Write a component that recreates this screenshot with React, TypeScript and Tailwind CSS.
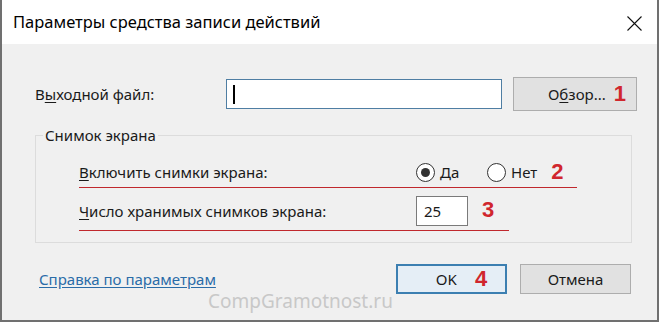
import React from "react";

const font = { fontFamily: '"Noto Sans", "Open Sans", sans-serif' };

function RedNum({ n }: { n: string }) {
  return (
    <span className="text-[22px] leading-none font-black text-[#d0262d]" style={{ fontFamily: '"Liberation Sans", Arial, sans-serif' }}>
      {n}
    </span>
  );
}

function Radio({ checked, label }: { checked?: boolean; label: string }) {
  return (
    <div className="flex items-center gap-[5px]">
      <span className="w-[19px] h-[19px] rounded-full border border-[#333] bg-white flex items-center justify-center">
        {checked && <span className="w-[9px] h-[9px] rounded-full bg-[#333]" />}
      </span>
      <span>{label}</span>
    </div>
  );
}

export default function App() {
  return (
    <div
      className="w-[659px] h-[322px] flex flex-col border-l-2 border-r-2 border-b-2 border-[#707070] bg-[#f0f0f0] text-[15px] text-[#1a1a1a] overflow-hidden"
      style={font}
    >
      {/* Title bar */}
      <div className="h-[44px] bg-white flex items-center justify-between pl-[11px] pr-[15px] shrink-0">
        <span className="text-[16.5px] text-black">Параметры средства записи действий</span>
        <svg width="15" height="15" viewBox="0 0 15 15" className="mt-[2px]">
          <path d="M0.5 0.5 L14.5 14.5 M14.5 0.5 L0.5 14.5" stroke="#111" strokeWidth="1.1" fill="none" />
        </svg>
      </div>

      {/* Body */}
      <div className="relative flex-1 flex flex-col">
        {/* Output file row */}
        <div className="flex items-center mt-[33px] h-[34px]">
          <span className="ml-[33px] w-[191px]">
            В<span className="underline underline-offset-2">ы</span>ходной файл:
          </span>
          <div className="w-[276px] h-[30px] border border-[#4f7ea3] bg-white flex items-center pl-[6px]">
            <span className="w-[1.5px] h-[19px] bg-black" />
          </div>
          <button className="ml-[11px] w-[124px] h-[34px] border border-[#adadad] bg-[#e1e1e1] flex items-center justify-end pr-[10px] gap-[8px]">
            <span>
              О<span className="underline underline-offset-2">б</span>зор...
            </span>
            <RedNum n="1" />
          </button>
        </div>

        {/* Group box */}
        <div className="relative ml-[33px] mt-[24px] w-[597px] h-[108px] border border-[#dcdcdc]">
          <span className="absolute -top-[12px] left-[7px] px-[2px] bg-[#f0f0f0]">Снимок экрана</span>

          <div className="ml-[43px] mt-[22px] w-[498px] h-[30px] border-b border-[#c0282d] flex items-center">
            <span className="w-[337px]">
              <span className="underline underline-offset-2">В</span>ключить снимки экрана:
            </span>
            <div className="w-[71px]">
              <Radio checked label="Да" />
            </div>
            <Radio label="Нет" />
            <span className="ml-[14px]">
              <RedNum n="2" />
            </span>
          </div>

          <div className="ml-[43px] w-[430px] pt-[8px] pb-[4px] border-b border-[#c0282d] flex items-center">
            <span className="w-[337px]">
              <span className="underline underline-offset-2">Ч</span>исло хранимых снимков экрана:
            </span>
            <div className="w-[52px] h-[30px] border border-[#7a7a7a] bg-white flex items-center pl-[7px]">25</div>
            <span className="ml-[14px]">
              <RedNum n="3" />
            </span>
          </div>
        </div>

        {/* Bottom row */}
        <div className="flex items-center mt-[21px] h-[30px]">
          <a className="ml-[37px] w-[357px] text-[#2a6ca8] underline underline-offset-2 cursor-pointer">Справка по параметрам</a>
          <button className="w-[111px] h-[30px] border-2 border-[#3c7fb1] bg-[#e5eef6] flex items-center justify-center gap-[18px] pl-[20px]">
            <span>OK</span>
            <RedNum n="4" />
          </button>
          <button className="ml-[13px] w-[111px] h-[30px] border border-[#adadad] bg-[#e1e1e1]">Отмена</button>
        </div>

        <span className="absolute left-[206px] top-[243px] text-[19px] text-[#c8c8c8]">CompGramotnost.ru</span>
      </div>
    </div>
  );
}
